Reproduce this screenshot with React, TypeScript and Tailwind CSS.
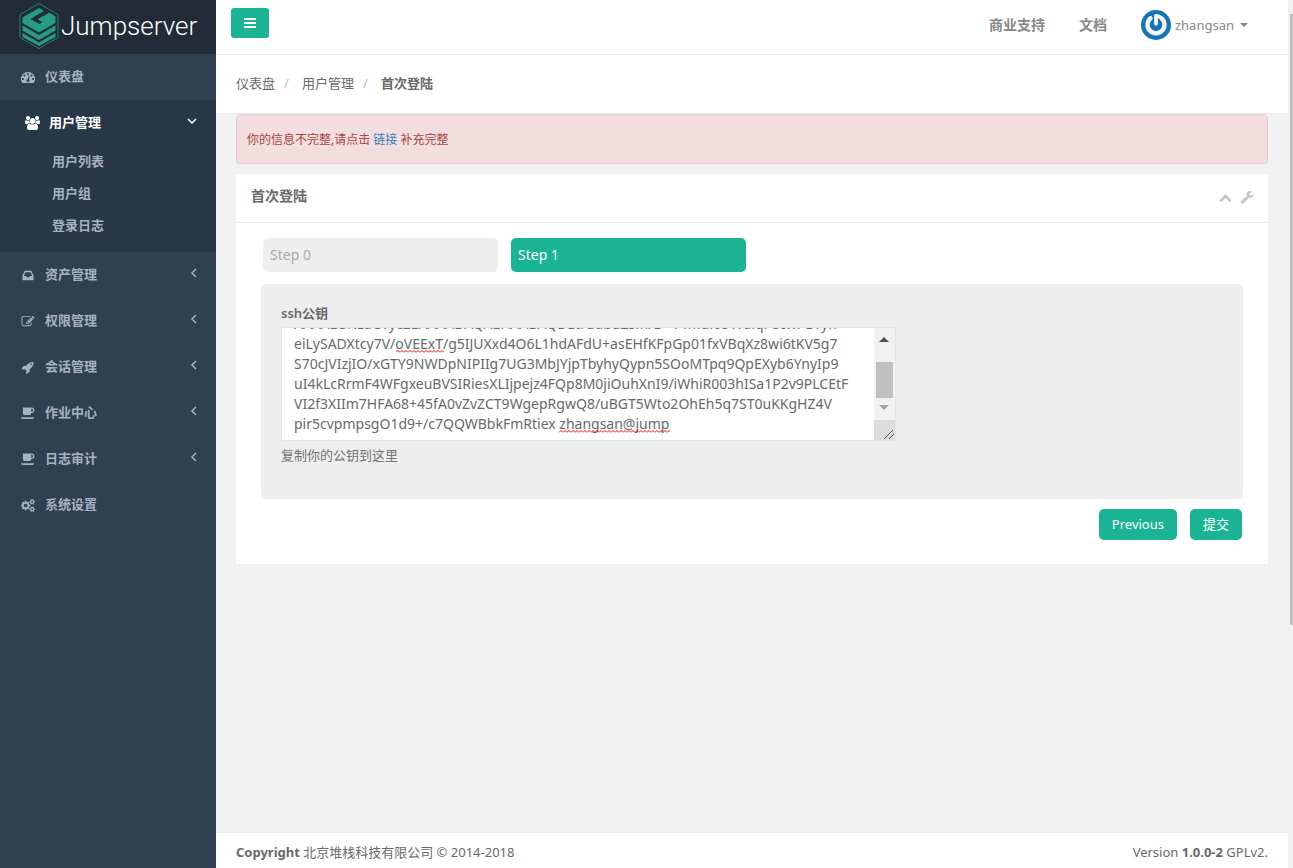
import { useId, useLayoutEffect, useRef } from "react";

const ICONS = {
  dashboard: {
    box: "0 0 1792 1792",
    d: "M384 1152q0-53-37.5-90.5t-90.5-37.5-90.5 37.5-37.5 90.5 37.5 90.5 90.5 37.5 90.5-37.5 37.5-90.5zm192-448q0-53-37.5-90.5t-90.5-37.5-90.5 37.5-37.5 90.5 37.5 90.5 90.5 37.5 90.5-37.5 37.5-90.5zm428 481l101-382q6-26-7.5-48.5t-38.5-29.5-48 6.5-30 39.5l-101 382q-60 5-107 43.5t-63 98.5q-20 77 20 146t117 89 146-20 89-117q16-60-6-117t-72-91zm660-33q0-53-37.5-90.5t-90.5-37.5-90.5 37.5-37.5 90.5 37.5 90.5 90.5 37.5 90.5-37.5 37.5-90.5zm-640-640q0-53-37.5-90.5t-90.5-37.5-90.5 37.5-37.5 90.5 37.5 90.5 90.5 37.5 90.5-37.5 37.5-90.5zm448 192q0-53-37.5-90.5t-90.5-37.5-90.5 37.5-37.5 90.5 37.5 90.5 90.5 37.5 90.5-37.5 37.5-90.5zm320 448q0 261-141 483-19 29-54 29h-1402q-35 0-54-29-141-221-141-483 0-182 71-348t191-286 286-191 348-71 348 71 286 191 191 286 71 348z",
  },
  users: {
    box: "0 0 1920 1792",
    d: "M593 896q-162 5-265 128h-134q-82 0-138-40.5t-56-118.5q0-353 124-353 6 0 43.5 21t97.5 42.5 119 21.5q67 0 133-23-5 37-5 66 0 139 81 256zm1071 637q0 120-73 189.5t-194 69.5h-874q-121 0-194-69.5t-73-189.5q0-53 3.5-103.5t14-109 26.5-108.5 43-97.5 62-81 85.5-53.5 111.5-20q10 0 43 21.5t73 48 107 48 135 21.5 135-21.5 107-48 73-48 43-21.5q61 0 111.5 20t85.5 53.5 62 81 43 97.5 26.5 108.5 14 109 3.5 103.5zm-1024-1277q0 106-75 181t-181 75-181-75-75-181 75-181 181-75 181 75 75 181zm704 384q0 159-112.5 271.5t-271.5 112.5-271.5-112.5-112.5-271.5 112.5-271.5 271.5-112.5 271.5 112.5 112.5 271.5zm576 225q0 78-56 118.5t-138 40.5h-134q-103-123-265-128 81-117 81-256 0-29-5-66 66 23 133 23 59 0 119-21.5t97.5-42.5 43.5-21q124 0 124 353zm-128-609q0 106-75 181t-181 75-181-75-75-181 75-181 181-75 181 75 75 181z",
  },
  inbox: {
    box: "0 0 1792 1792",
    d: "M1151 960h316q-1-3-2.5-8.5t-2.5-7.5l-212-496h-708l-212 496q-1 3-2.5 8.5t-2.5 7.5h316l95 192h320zm513 30v482q0 26-19 45t-45 19h-1408q-26 0-45-19t-19-45v-482q0-62 25-123l238-552q10-25 36.5-42t52.5-17h832q26 0 52.5 17t36.5 42l238 552q25 61 25 123z",
  },
  edit: {
    box: "0 0 1792 1792",
    d: "M888 1184l116-116-152-152-116 116v56h96v96h56zm440-720q-16-16-33 1l-350 350q-17 17-1 33t33-1l350-350q17-17 1-33zm80 594v190q0 119-84.5 203.5t-203.5 84.5h-832q-119 0-203.5-84.5t-84.5-203.5v-832q0-119 84.5-203.5t203.5-84.5h832q63 0 117 25 15 7 18 23 3 17-9 29l-49 49q-14 14-32 8-23-6-45-6h-832q-66 0-113 47t-47 113v832q0 66 47 113t113 47h832q66 0 113-47t47-113v-126q0-13 9-22l64-64q15-15 35-7t20 29zm-96-738l288 288-672 672h-288v-288zm444 132l-92 92-288-288 92-92q28-28 68-28t68 28l152 152q28 28 28 68t-28 68z",
  },
  rocket: {
    box: "0 0 1792 1792",
    d: "M1440 448q0-40-28-68t-68-28-68 28-28 68 28 68 68 28 68-28 28-68zm224-288q0 249-75.5 430.5t-253.5 360.5q-81 80-195 176l-20 379q-2 16-16 26l-384 224q-7 4-16 4-12 0-23-9l-64-64q-13-14-8-32l85-276-281-281-276 85q-3 1-9 1-14 0-23-9l-64-64q-17-19-5-39l224-384q10-14 26-16l379-20q96-114 176-195 188-187 358-258t431-71q14 0 24 9.5t10 22.5z",
  },
  coffee: {
    box: "0 0 1920 1792",
    d: "M1664 448q0-80-56-136t-136-56h-64v384h64q80 0 136-56t56-136zm-1664 960h1792q0 106-75 181t-181 75h-1280q-106 0-181-75t-75-181zm1856-960q0 159-112.5 271.5t-271.5 112.5h-64v32q0 92-66 158t-158 66h-704q-92 0-158-66t-66-158v-736q0-26 19-45t45-19h1152q159 0 271.5 112.5t112.5 271.5z",
  },
  cogs: {
    box: "0 0 1920 1792",
    d: "M896 896q0-106-75-181t-181-75-181 75-75 181 75 181 181 75 181-75 75-181zm768 512q0-52-38-90t-90-38-90 38-38 90q0 53 37.5 90.5t90.5 37.5 90.5-37.5 37.5-90.5zm0-1024q0-52-38-90t-90-38-90 38-38 90q0 53 37.5 90.5t90.5 37.5 90.5-37.5 37.5-90.5zm-384 421v185q0 10-7 19.5t-16 10.5l-155 24q-11 35-32 76 34 48 90 115 7 10 7 20 0 12-7 19-23 30-82.5 89.5t-78.5 59.5q-11 0-21-7l-115-90q-37 19-77 31-11 108-23 155-7 24-30 24h-186q-11 0-20-7.5t-10-17.5l-23-153q-34-10-75-31l-118 89q-7 7-20 7-11 0-21-8-144-133-144-160 0-9 7-19 10-14 41-53t47-61q-23-44-35-82l-152-24q-10-1-17-9.5t-7-19.5v-185q0-10 7-19.5t16-10.5l155-24q11-35 32-76-34-48-90-115-7-11-7-20 0-12 7-20 22-30 82-89t79-59q11 0 21 7l115 90q34-18 77-32 11-108 23-154 7-24 30-24h186q11 0 20 7.5t10 17.5l23 153q34 10 75 31l118-89q8-7 20-7 11 0 21 8 144 133 144 160 0 9-7 19-12 16-42 54t-45 60q23 48 34 82l152 23q10 2 17 10.5t7 19.5zm640 533v140q0 16-149 31-12 27-30 52 51 113 51 138 0 4-4 7-122 71-124 71-8 0-46-47t-52-68q-20 2-30 2t-30-2q-14 21-52 68t-46 47q-2 0-124-71-4-3-4-7 0-25 51-138-18-25-30-52-149-15-149-31v-140q0-16 149-31 13-29 30-52-51-113-51-138 0-4 4-7 4-2 35-20t59-34 30-16q8 0 46 46.5t52 67.5q20-2 30-2t30 2q51-71 92-112l6-2q4 0 124 70 4 3 4 7 0 25-51 138 17 23 30 52 149 15 149 31zm0-1024v140q0 16-149 31-12 27-30 52 51 113 51 138 0 4-4 7-122 71-124 71-8 0-46-47t-52-68q-20 2-30 2t-30-2q-14 21-52 68t-46 47q-2 0-124-71-4-3-4-7 0-25 51-138-18-25-30-52-149-15-149-31v-140q0-16 149-31 13-29 30-52-51-113-51-138 0-4 4-7 4-2 35-20t59-34 30-16q8 0 46 46.5t52 67.5q20-2 30-2t30 2q51-71 92-112l6-2q4 0 124 70 4 3 4 7 0 25-51 138 17 23 30 52 149 15 149 31z",
  },
  wrench: {
    box: "0 0 1792 1792",
    d: "M448 1472q0-26-19-45t-45-19-45 19-19 45 19 45 45 19 45-19 19-45zm644-420l-682 682q-37 37-90 37-52 0-91-37l-106-108q-38-36-38-90 0-53 38-91l681-681q39 98 114.5 173.5t173.5 114.5zm634-435q0 39-23 106-47 134-164.5 217.5t-258.5 83.5q-185 0-316.5-131.5t-131.5-316.5 131.5-316.5 316.5-131.5q58 0 121.5 16.5t107.5 46.5q16 11 16 28t-16 28l-293 169v224l193 107q5-3 79-48.5t135.5-81 70.5-35.5q15 0 23.5 10t8.5 25z",
  },
  chevronUp: {
    box: "0 0 1792 1792",
    d: "M1683 1331l-166 165q-19 19-45 19t-45-19l-531-531-531 531q-19 19-45 19t-45-19l-166-165q-19-19-19-45.5t19-45.5l742-741q19-19 45-19t45 19l742 741q19 19 19 45.5t-19 45.5z",
  },
};

type IconName = keyof typeof ICONS;

function Icon({ name, className }: { name: IconName; className: string }) {
  return (
    <svg aria-hidden="true" viewBox={ICONS[name].box} fill="currentColor" className={className}>
      <path d={ICONS[name].d} />
    </svg>
  );
}

function Angle({ open }: { open?: boolean }) {
  return (
    <svg aria-hidden="true" viewBox="0 0 10 10" fill="none" stroke="currentColor" strokeWidth="1.5" className="mb-[2px] size-[10px]">
      <path d={open ? "M1 3l4 4 4-4" : "M7 1L3 5l4 4"} />
    </svg>
  );
}

function Logo() {
  return (
    <svg aria-hidden="true" viewBox="0 0 40 48" className="h-[48px] w-[40px] shrink-0">
      <path d="M20 1.5L39 12.500v23L20 46.500 1 35.500v-23z" fill="none" stroke="#2c7a70" strokeWidth="1" />
      <g fill="#269d80">
        <path d="M3.500 15.500L20 6l5 3L11.500 17l9 5 3-1.800-5-3L30.500 10.500l6 4V21L20 30.500 3.500 21z" />
        <path d="M3.500 23.500L20 33l16.500-9.500v5L20 38 3.500 28.500z" />
        <path d="M3.500 31L20 40.500 36.500 31v4L20 44 3.500 35z" />
      </g>
    </svg>
  );
}

function Avatar() {
  return (
    <svg aria-hidden="true" viewBox="0 0 30 30" className="size-[30px] shrink-0">
      <circle cx="15" cy="15" r="15" fill="#0f76b8" />
      <path d="M9.500 8.500a8.500 8.500 0 1 0 11 0" fill="none" stroke="#b9c4cb" strokeWidth="4.500" strokeLinecap="round" />
      <path d="M9.500 8a8.500 8.500 0 1 0 11 0c-1-1-3-2.200-5.500-2.200v8" fill="none" stroke="#f7f7f5" strokeWidth="3.800" strokeLinecap="round" strokeLinejoin="round" />
    </svg>
  );
}

const MENU: { icon: IconName; label: string; arrow: boolean }[] = [
  { icon: "inbox", label: "资产管理", arrow: true },
  { icon: "edit", label: "权限管理", arrow: true },
  { icon: "rocket", label: "会话管理", arrow: true },
  { icon: "coffee", label: "作业中心", arrow: true },
  { icon: "coffee", label: "日志审计", arrow: true },
  { icon: "cogs", label: "系统设置", arrow: false },
];

const PUBLIC_KEY = [
  "ssh-rsa",
  "AAAAB3NzaC1yc2EAAAADAQABAAABAQDEtrudbuZsm/D+T4mdrIUWdiqFUIwPE1yh",
  "eiLySADXtcy7V/oVEExT/g5IJUXxd4O6L1hdAFdU+asEHfKFpGp01fxVBqXz8wi6tKV5g7",
  "S70cJVIzjIO/xGTY9NWDpNIPIIg7UG3MbJYjpTbyhyQypn5SOoMTpq9QpEXyb6YnyIp9",
  "uI4kLcRrmF4WFgxeuBVSIRiesXLIjpejz4FQp8M0jiOuhXnI9/iWhiR003hISa1P2v9PLCEtF",
  "VI2f3XIIm7HFA68+45fA0vZvZCT9WgepRgwQ8/uBGT5Wto2OhEh5q7ST0uKKgHZ4V",
  "pir5cvpmpsgO1d9+/c7QQWBbkFmRtiex zhangsan@jump",
].join("\n");

// Wavy red line under a misspelt word
function Squiggle({ className }: { className: string }) {
  const id = useId();
  return (
    <svg aria-hidden="true" className={className}>
      <defs>
        <pattern id={id} width="4" height="3" patternUnits="userSpaceOnUse">
          <path d="M0 2.500L2 .5l2 2" fill="none" stroke="#f00" />
        </pattern>
      </defs>
      <rect width="100%" height="3" fill={`url(#${id})`} />
    </svg>
  );
}

function Sidebar() {
  return (
    <nav aria-label="主导航" className="w-[216px] shrink-0 bg-[#2f4050] font-semibold text-[#a7b1c2]">
      <a href="#" className="flex h-[54px] items-center bg-[#212c38] pb-[2px] pl-[19px] font-['Roboto'] text-[26px] font-light text-white">
        <Logo />
        <span className="pl-[2px]">Jumpserver</span>
      </a>
      <a href="#" className="flex h-[46px] items-center pb-[2px] pl-[21px]">
        <Icon name="dashboard" className="mt-[2px] h-[14px] w-[14px]" />
        <span className="pl-[10px]">仪表盘</span>
      </a>
      <div className="bg-[#293846] pb-[10px]">
        <button type="button" aria-expanded="true" className="flex h-[46px] w-full items-center pr-[19px] pb-[2px] pl-[25px] text-white">
          <Icon name="users" className="mt-[2px] h-[14px] w-[15px]" />
          <span className="flex-1 pl-[9px] text-left">用户管理</span>
          <Angle open />
        </button>
        <ul>
          {["用户列表", "用户组", "登录日志"].map((item) => (
            <li key={item}>
              <a href="#" className="flex h-8 items-center pb-[2px] pl-[52px]">{item}</a>
            </li>
          ))}
        </ul>
      </div>
      <ul>
        {MENU.map((item) => (
          <li key={item.label}>
            <button type="button" className="flex h-[46px] w-full items-center pr-[17px] pb-[2px] pl-[21px]">
              <Icon name={item.icon} className="mt-[2px] h-[13px] w-[14px]" />
              <span className="flex-1 pl-[10px] text-left">{item.label}</span>
              {item.arrow && <Angle />}
            </button>
          </li>
        ))}
      </ul>
    </nav>
  );
}

function KeyField() {
  const ref = useRef<HTMLTextAreaElement>(null);
  useLayoutEffect(() => {
    if (ref.current) ref.current.scrollTop = ref.current.scrollHeight;
  }, []);
  return (
    <div className="w-[615px] max-w-full">
      <label htmlFor="public-key" className="block pb-1 font-semibold">ssh公钥</label>
      <div className="relative h-[114px]">
        <textarea
          id="public-key"
          ref={ref}
          spellCheck={false}
          defaultValue={PUBLIC_KEY}
          className="block h-full w-full resize-none overflow-hidden border border-[#e5e6e7] bg-white px-3 py-[6px] text-[14px] leading-5 whitespace-pre outline-none"
        />
        <Squiggle className="absolute top-[23px] left-[115px] h-[3px] w-[48px]" />
        <Squiggle className="absolute top-[103px] left-[278px] h-[3px] w-[111px]" />
        <div aria-hidden="true" className="absolute inset-y-px right-px flex w-[21px] flex-col bg-[#f1f1f1]">
          <svg viewBox="0 0 21 92" className="h-[92px] w-[21px]">
            <path d="M5 14l5-5 5 5z" fill="#505050" />
            <path d="M2 34h17v36H2z" fill="#c1c1c1" />
            <path d="M5 77l5 5 5-5z" fill="#a3a3a3" />
          </svg>
          <svg viewBox="0 0 21 20" className="h-[20px] w-[21px] bg-[#dcdcdc]">
            <path d="M10 19l9-9M15 19l5-5" stroke="#555" fill="none" />
          </svg>
        </div>
      </div>
      <p className="pt-1 text-[#737373]">复制你的公钥到这里</p>
    </div>
  );
}

export default function App() {
  return (
    <div className="flex min-h-screen bg-[#f2f2f2] font-['Noto_Sans','Noto_Sans_CJK_SC',sans-serif] text-[13px] leading-5 text-[#676a6c]">
      <Sidebar />
      <div className="flex min-w-0 flex-1 flex-col">
        <header className="flex h-[55px] items-center justify-between border-b border-[#e7eaec] bg-white pr-10 pb-1 pl-[15px]">
          <button type="button" aria-label="菜单" className="mb-1 flex h-[30px] w-[38px] items-center justify-center rounded-[3px] bg-[#1ab394] text-white">
            <svg aria-hidden="true" viewBox="0 0 12 10" fill="currentColor" className="h-[10px] w-[12px]">
              <path d="M0 0h12v2H0zM0 4h12v2H0zM0 8h12v2H0z" />
            </svg>
          </button>
          <div className="flex items-center pb-px text-[#888]">
            <a href="#" className="pr-[34px] text-[14px] font-semibold">商业支持</a>
            <a href="#" className="pr-[34px] text-[14px] font-semibold">文档</a>
            <button type="button" className="flex items-center">
              <Avatar />
              <span className="pl-1">zhangsan</span>
              <svg aria-hidden="true" viewBox="0 0 8 4" fill="currentColor" className="ml-[6px] h-[4px] w-[8px]">
                <path d="M0 0h8L4 4z" />
              </svg>
            </button>
          </div>
        </header>
        <nav aria-label="面包屑" className="flex h-[59px] items-center border-b border-[#e7eaec] bg-white pb-[2px] pl-5">
          <a href="#">仪表盘</a>
          <span className="w-[27px] pr-1 text-center text-[#bbb]">/</span>
          <a href="#">用户管理</a>
          <span className="w-[27px] pr-1 text-center text-[#bbb]">/</span>
          <strong className="font-semibold">首次登陆</strong>
        </nav>
        <main className="flex-1 px-5">
          <div role="alert" className="flex h-[50px] items-center rounded-[4px] border border-[#ebccd1] bg-[#f2dede] px-[10px] pt-[2px] text-[12px] text-[#a94442]">
            <p>你的信息不完整,请点击 <a href="#" className="text-[#337ab7]">链接</a> 补充完整</p>
          </div>
          <section className="mt-[10px] bg-white">
            <div className="flex h-[49px] items-center justify-between border-b border-[#e7eaec] pr-[14px] pb-1 pl-[15px]">
              <h5 className="text-[14px] font-semibold">首次登陆</h5>
              <div className="flex gap-2 pt-[2px] text-[#c4c4c4]">
                <button type="button" aria-label="收起"><Icon name="chevronUp" className="size-[13px]" /></button>
                <button type="button" aria-label="设置"><Icon name="wrench" className="size-[14px]" /></button>
              </div>
            </div>
            <form className="px-[25px] pt-[15px] pb-6" onSubmit={(e) => e.preventDefault()}>
              <div className="flex gap-[13px] px-[2px] text-[14px]">
                <button type="button" className="h-[34px] w-[235px] rounded-[5px] bg-[#eee] px-[7px] text-left text-[#aaa]">Step 0</button>
                <button type="button" className="h-[34px] w-[235px] rounded-[5px] bg-[#1ab394] px-[7px] text-left text-white">Step 1</button>
              </div>
              <div className="mt-3 h-[215px] rounded-[5px] bg-[#eee] px-5 pt-[19px]">
                <KeyField />
              </div>
              <div className="flex justify-end gap-[13px] pt-[10px] pr-px text-white">
                <button type="button" className="h-[31px] rounded-[5px] bg-[#1ab394] px-[13px] pb-px">Previous</button>
                <button type="submit" className="h-[31px] rounded-[5px] bg-[#1ab394] px-[13px] pb-px">提交</button>
              </div>
            </form>
          </section>
        </main>
        <footer className="flex h-9 items-center justify-between border-t border-[#e7eaec] bg-white px-5 pt-[3px]">
          <p><strong>Copyright</strong> 北京堆栈科技有限公司 © 2014-2018</p>
          <p>Version <strong>1.0.0-2</strong> GPLv2.</p>
        </footer>
      </div>
      <div aria-hidden="true" className="w-[5px] shrink-0 bg-[#f1f1f1] pt-[14px] pl-[2px]">
        <div className="h-[611px] bg-[#c1c1c1]" />
      </div>
    </div>
  );
}
